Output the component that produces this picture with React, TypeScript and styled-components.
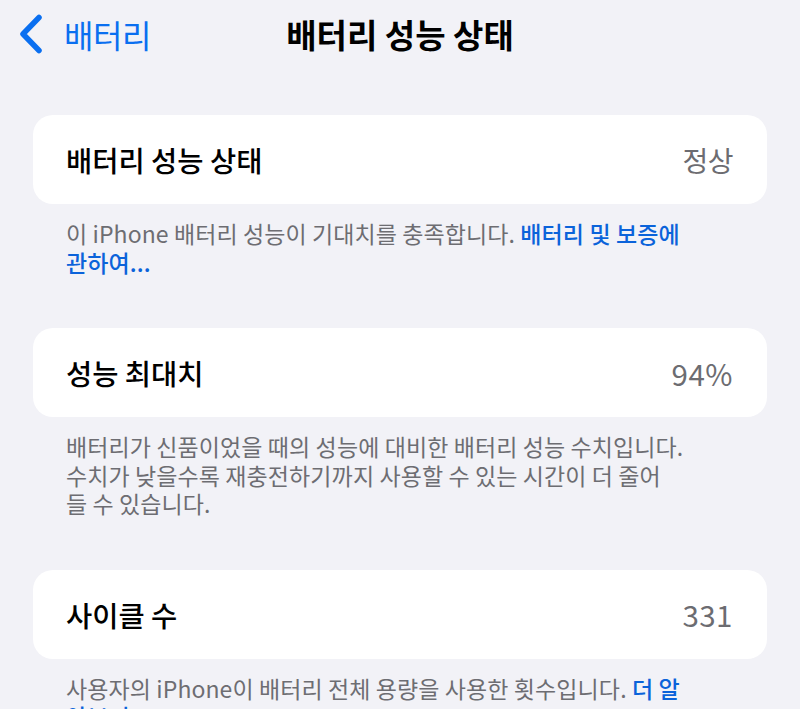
import React from "react";
import styled, { createGlobalStyle } from "styled-components";

const GlobalStyle = createGlobalStyle`
  html, body {
    margin: 0;
    padding: 0;
    background: #f2f2f7;
  }
  body {
    font-family: "Noto Sans CJK KR", "Noto Sans", sans-serif;
    overflow: hidden;
  }
`;

const Page = styled.main`
  width: 800px;
  height: 709px;
  overflow: hidden;
  background: #f2f2f7;
`;

const NavBar = styled.header`
  display: grid;
  grid-template-columns: 1fr auto 1fr;
  align-items: center;
  height: 64px;
  margin-top: 2px;
`;

const BackButton = styled.div`
  display: flex;
  align-items: center;
  gap: 20px;
  padding-left: 18px;
  color: #0a6ff0;
  font-size: 32px;
  font-weight: 400;
  letter-spacing: -0.5px;
`;

const Title = styled.h1`
  margin: 0;
  font-size: 33px;
  font-weight: 700;
  color: #000;
  letter-spacing: 0;
`;

const Content = styled.div`
  display: flex;
  flex-direction: column;
  padding: 49px 33px 0;
`;

const Section = styled.section`
  display: flex;
  flex-direction: column;
  gap: 15px;
  margin-bottom: 52px;
`;

const Card = styled.div`
  display: flex;
  align-items: center;
  justify-content: space-between;
  height: 89px;
  padding: 0 34px 0 33px;
  background: #fff;
  border-radius: 20px;
`;

const Label = styled.span`
  font-size: 28.5px;
  font-weight: 500;
  color: #000;
`;

const Value = styled.span<{ $numeric?: boolean }>`
  font-size: ${({ $numeric }) => ($numeric ? "29.5px" : "28px")};
  font-weight: 400;
  color: #6c6c71;
  letter-spacing: ${({ $numeric }) => ($numeric ? "0.5px" : "-0.5px")};
`;

const Footer = styled.p`
  margin: 0;
  padding-left: 33px;
  font-size: 23px;
  line-height: 28.5px;
  color: #6d6d72;
  letter-spacing: 0.1px;
`;

const Line = styled.span`
  display: block;
  white-space: nowrap;
`;

const Link = styled.a`
  color: #0b63da;
  font-weight: 500;
  text-decoration: none;
`;

const Chevron = () => (
  <svg width="26" height="40" viewBox="0 0 26 40" fill="none">
    <path
      d="M21 3.5 L5 20 L21 36.5"
      stroke="#0a6ff0"
      strokeWidth="5.5"
      strokeLinecap="round"
      strokeLinejoin="round"
    />
  </svg>
);

type Row = {
  label: string;
  value: string;
  numeric?: boolean;
  footer: React.ReactNode[];
};

const rows: Row[] = [
  {
    label: "배터리 성능 상태",
    value: "정상",
    footer: [
      <>
        이 iPhone 배터리 성능이 기대치를 충족합니다. <Link>배터리 및 보증에</Link>
      </>,
      <Link>관하여...</Link>,
    ],
  },
  {
    label: "성능 최대치",
    value: "94%",
    numeric: true,
    footer: [
      "배터리가 신품이었을 때의 성능에 대비한 배터리 성능 수치입니다.",
      "수치가 낮을수록 재충전하기까지 사용할 수 있는 시간이 더 줄어",
      "들 수 있습니다.",
    ],
  },
  {
    label: "사이클 수",
    value: "331",
    numeric: true,
    footer: [
      <>
        사용자의 iPhone이 배터리 전체 용량을 사용한 횟수입니다. <Link>더 알</Link>
      </>,
      <Link>아보기...</Link>,
    ],
  },
];

export default function App() {
  return (
    <Page>
      <GlobalStyle />
      <NavBar>
        <BackButton>
          <Chevron />
          배터리
        </BackButton>
        <Title>배터리 성능 상태</Title>
        <div />
      </NavBar>
      <Content>
        {rows.map((row) => (
          <Section key={row.label}>
            <Card>
              <Label>{row.label}</Label>
              <Value $numeric={row.numeric}>{row.value}</Value>
            </Card>
            <Footer>
              {row.footer.map((line, i) => (
                <Line key={i}>{line}</Line>
              ))}
            </Footer>
          </Section>
        ))}
      </Content>
    </Page>
  );
}
